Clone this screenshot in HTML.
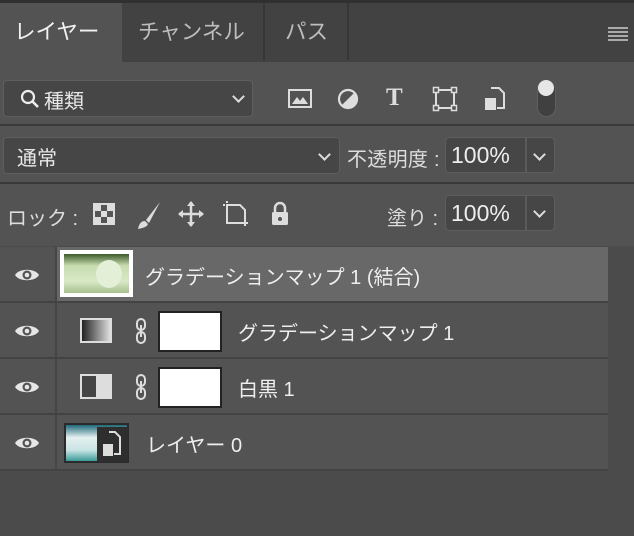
<!DOCTYPE html>
<html><head><meta charset="utf-8"><style>
*{margin:0;padding:0;box-sizing:border-box}
body{width:634px;height:536px;background:#4b4b4b;font-family:"Liberation Sans","Noto Sans CJK JP",sans-serif;color:#e6e6e6;position:relative;overflow:hidden}
.a{position:absolute}
.t{font-size:21.5px;color:#bdbdbd;top:15px}
.box{position:absolute;background:#464646;border:1.5px solid #5e5e5e;border-radius:4px}
.lbl{position:absolute;font-size:19.5px;color:#e8e8e8}
.chev{position:absolute;width:9px;height:9px;border-right:2px solid #ddd;border-bottom:2px solid #ddd;transform:rotate(45deg)}
.row{position:absolute;left:0;width:608px;height:56px;background:#535353;border-bottom:2px solid #434343}
.eye{position:absolute;left:14px;top:19px;width:26px;height:18px}
.vl{position:absolute;left:55px;top:0;width:2px;height:100%;background:#454545}
.name{position:absolute;font-size:20px;color:#eee;top:14px}
.num{position:absolute;font-size:23px;color:#eee;left:451px}
</style></head><body>
<div class="a" style="left:0;top:0;width:634px;height:62px;background:#424242"></div>
<div class="a" style="left:0;top:0;width:634px;height:3px;background:#303030"></div>
<div class="a" style="left:0;top:3px;width:122px;height:59px;background:#535353"></div>
<div class="a" style="left:122px;top:3px;width:143px;height:57px;border-right:2px solid #363636"></div>
<div class="a" style="left:265px;top:3px;width:84px;height:57px;border-right:2px solid #363636"></div>
<div class="a t" style="left:14px;color:#f2f2f2">レイヤー</div>
<div class="a t" style="left:138px">チャンネル</div>
<div class="a t" style="left:285px">パス</div>
<div class="a" style="left:608px;top:27px;width:20px;height:2px;background:#aaa;box-shadow:0 4px 0 #aaa,0 8px 0 #aaa,0 12px 0 #aaa"></div>
<div class="a" style="left:0;top:62px;width:634px;height:62px;background:#535353"></div>
<div class="a" style="left:0;top:124px;width:634px;height:2px;background:#3a3a3a"></div>
<div class="a" style="left:0;top:126px;width:634px;height:56px;background:#535353"></div>
<div class="a" style="left:0;top:182px;width:634px;height:2px;background:#3a3a3a"></div>
<div class="a" style="left:0;top:184px;width:634px;height:62px;background:#535353"></div>
<!-- filter -->
<div class="box" style="left:3px;top:80px;width:250px;height:37px"></div>
<svg class="a" style="left:20px;top:89px" width="20" height="20"><circle cx="8" cy="8" r="6" stroke="#eee" stroke-width="2.2" fill="none"/><line x1="12" y1="12" x2="18" y2="18" stroke="#eee" stroke-width="2.6"/></svg>
<div class="lbl" style="left:44px;top:85px;font-size:20px">種類</div>
<div class="chev" style="left:234px;top:92px"></div>
<svg class="a" style="left:287px;top:88px" width="26" height="22"><rect x="2" y="2" width="22" height="17" stroke="#ddd" stroke-width="2" fill="none"/><path d="M5 16 L10 9 L13 13 L16 9 L21 16Z" fill="#ddd"/></svg>
<svg class="a" style="left:336px;top:87px" width="24" height="24"><circle cx="12" cy="12" r="9" stroke="#ddd" stroke-width="2.2" fill="none"/><path d="M18.4 5.6 A9 9 0 0 1 5.6 18.4Z" fill="#ddd"/></svg>
<div class="lbl" style="left:386px;top:84px;font-family:'Liberation Serif',serif;font-size:25px;font-weight:bold;color:#ddd">T</div>
<svg class="a" style="left:432px;top:86px" width="26" height="26"><rect x="4" y="4" width="18" height="18" stroke="#ddd" stroke-width="2" fill="none"/><g fill="#555" stroke="#ddd" stroke-width="1.5"><rect x="1.5" y="1.5" width="5" height="5"/><rect x="19.5" y="1.5" width="5" height="5"/><rect x="1.5" y="19.5" width="5" height="5"/><rect x="19.5" y="19.5" width="5" height="5"/></g></svg>
<svg class="a" style="left:482px;top:86px" width="24" height="26"><path d="M9 2 H17 L22 7 V22 H15" stroke="#ddd" stroke-width="2" fill="none"/><rect x="3" y="12" width="11" height="12" fill="#ddd"/></svg>
<div class="a" style="left:537px;top:80px;width:19px;height:37px;border-radius:10px;background:#404040;border:1.5px solid #5f5f5f"></div>
<div class="a" style="left:538px;top:80px;width:16px;height:16px;border-radius:8px;background:#e6e6e6"></div>
<!-- blend -->
<div class="box" style="left:3px;top:137px;width:337px;height:37px"></div>
<div class="lbl" style="left:17px;top:142px;font-size:20px">通常</div>
<div class="chev" style="left:320px;top:150px"></div>
<div class="lbl" style="left:347px;top:143px;color:#ddd;font-size:20px;letter-spacing:0.3px">不透明度 :</div>
<div class="box" style="left:445px;top:137px;width:110px;height:36px"></div>
<div class="a" style="left:525px;top:138px;width:2px;height:34px;background:#5a5a5a"></div>
<div class="num" style="top:142px">100%</div>
<div class="chev" style="left:535px;top:150px"></div>
<!-- lock -->
<div class="lbl" style="left:7px;top:202px;color:#ddd;font-size:20px">ロック :</div>
<svg class="a" style="left:93px;top:203px" width="22" height="22"><rect x="1" y="1" width="20" height="20" stroke="#ddd" stroke-width="2" fill="#555"/><g fill="#ddd"><rect x="2" y="2" width="6" height="6"/><rect x="14" y="2" width="6" height="6"/><rect x="8" y="8" width="6" height="6"/><rect x="2" y="14" width="6" height="6"/><rect x="14" y="14" width="6" height="6"/></g></svg>
<svg class="a" style="left:135px;top:200px" width="28" height="30"><path d="M25 2 L11 20 L14 23 Z" fill="#ddd"/><path d="M10 21 C6 21 4 24 3 29 C8 28 12 27 13 24Z" fill="#ddd"/></svg>
<svg class="a" style="left:177px;top:200px" width="28" height="28"><path d="M14 2V26M2 14H26" stroke="#ddd" stroke-width="2.5"/><path d="M14 1 L10 6 H18Z M14 27 L10 22 H18Z M1 14 L6 10 V18Z M27 14 L22 10 V18Z" fill="#ddd"/></svg>
<svg class="a" style="left:221px;top:201px" width="30" height="28"><path d="M6 4 H19 L24 9 V22 H6Z" stroke="#ddd" stroke-width="2" fill="none"/><path d="M2 4H5M6 0V3M24 23V27M25 22H29" stroke="#ddd" stroke-width="2" stroke-dasharray="2 2"/></svg>
<svg class="a" style="left:270px;top:201px" width="20" height="26"><path d="M5 11V7a5 5 0 0 1 10 0v4" stroke="#ddd" stroke-width="2.5" fill="none"/><rect x="2" y="11" width="16" height="13" rx="1.5" fill="#ddd"/><circle cx="10" cy="18" r="2" fill="#555"/></svg>
<div class="lbl" style="left:387px;top:202px;color:#ddd;font-size:20px">塗り :</div>
<div class="box" style="left:445px;top:195px;width:110px;height:36px"></div>
<div class="a" style="left:525px;top:196px;width:2px;height:34px;background:#5a5a5a"></div>
<div class="num" style="top:200px">100%</div>
<div class="chev" style="left:535px;top:207px"></div>
<!-- layers -->
<svg width="0" height="0" style="position:absolute"><defs><symbol id="eye" viewBox="0 0 26 18"><path d="M1 9 C5 2 21 2 25 9 C21 16 5 16 1 9Z" fill="#e6e6e6"/><circle cx="13" cy="9" r="4.5" fill="#535353"/><circle cx="13" cy="9" r="2.3" fill="#e6e6e6"/></symbol><symbol id="chain" viewBox="0 0 12 28"><rect x="2" y="2" width="8" height="11" rx="4" stroke="#ddd" stroke-width="2" fill="none"/><rect x="2" y="15" width="8" height="11" rx="4" stroke="#ddd" stroke-width="2" fill="none"/><line x1="6" y1="8" x2="6" y2="20" stroke="#ddd" stroke-width="2"/></symbol></defs></svg>
<div class="row" style="top:247px;background:#535353">
<div class="a" style="left:57px;top:0;width:551px;height:54px;background:#686868"></div>
<svg class="eye"><use href="#eye"/></svg><div class="vl"></div>
<div class="a" style="left:60px;top:3px;width:73px;height:47px;background:#fff;padding:4px"><div style="width:100%;height:100%;background:linear-gradient(180deg,#3d5a2a 0,#c7ddb0 30%,#d8e8c4 70%,#a8c090 100%);position:relative"><div style="position:absolute;left:32px;top:6px;width:26px;height:28px;border-radius:50%;background:#e4efd8"></div></div></div>
<div class="name" style="left:145px">グラデーションマップ 1 (結合)</div>
</div>
<div class="row" style="top:303px">
<svg class="eye"><use href="#eye"/></svg><div class="vl"></div>
<div class="a" style="left:80px;top:15px;width:32px;height:25px;border:2px solid #ddd;background:linear-gradient(90deg,#222,#ddd)"></div>
<svg class="a" style="left:135px;top:13px" width="12" height="30"><use href="#chain"/></svg>
<div class="a" style="left:158px;top:8px;width:64px;height:41px;background:#fff;border:2px solid #222"></div>
<div class="name" style="left:238px">グラデーションマップ 1</div>
</div>
<div class="row" style="top:359px">
<svg class="eye"><use href="#eye"/></svg><div class="vl"></div>
<div class="a" style="left:80px;top:15px;width:32px;height:25px;border:2px solid #ddd;background:linear-gradient(90deg,#444 50%,#ddd 50%)"></div>
<svg class="a" style="left:135px;top:13px" width="12" height="30"><use href="#chain"/></svg>
<div class="a" style="left:158px;top:8px;width:64px;height:41px;background:#fff;border:2px solid #222"></div>
<div class="name" style="left:238px">白黒 1</div>
</div>
<div class="row" style="top:415px">
<svg class="eye"><use href="#eye"/></svg><div class="vl"></div>
<div class="a" style="left:64px;top:8px;width:65px;height:40px;background:#2a2a2a;padding:2px"><div style="width:100%;height:100%;background:linear-gradient(180deg,#1f6a7a 0,#e6f0f0 35%,#c8e4e4 70%,#3a9a9a 100%)"></div></div>
<div class="a" style="left:97px;top:12px;width:31px;height:35px;background:#2e2e2e"></div>
<svg class="a" style="left:100px;top:15px" width="24" height="30"><path d="M9 2 H15 L20 7 V24 H14" stroke="#ddd" stroke-width="2" fill="none"/><rect x="3" y="14" width="10" height="12" fill="#ddd"/></svg>
<div class="name" style="left:146px">レイヤー 0</div>
</div>
</body></html>
